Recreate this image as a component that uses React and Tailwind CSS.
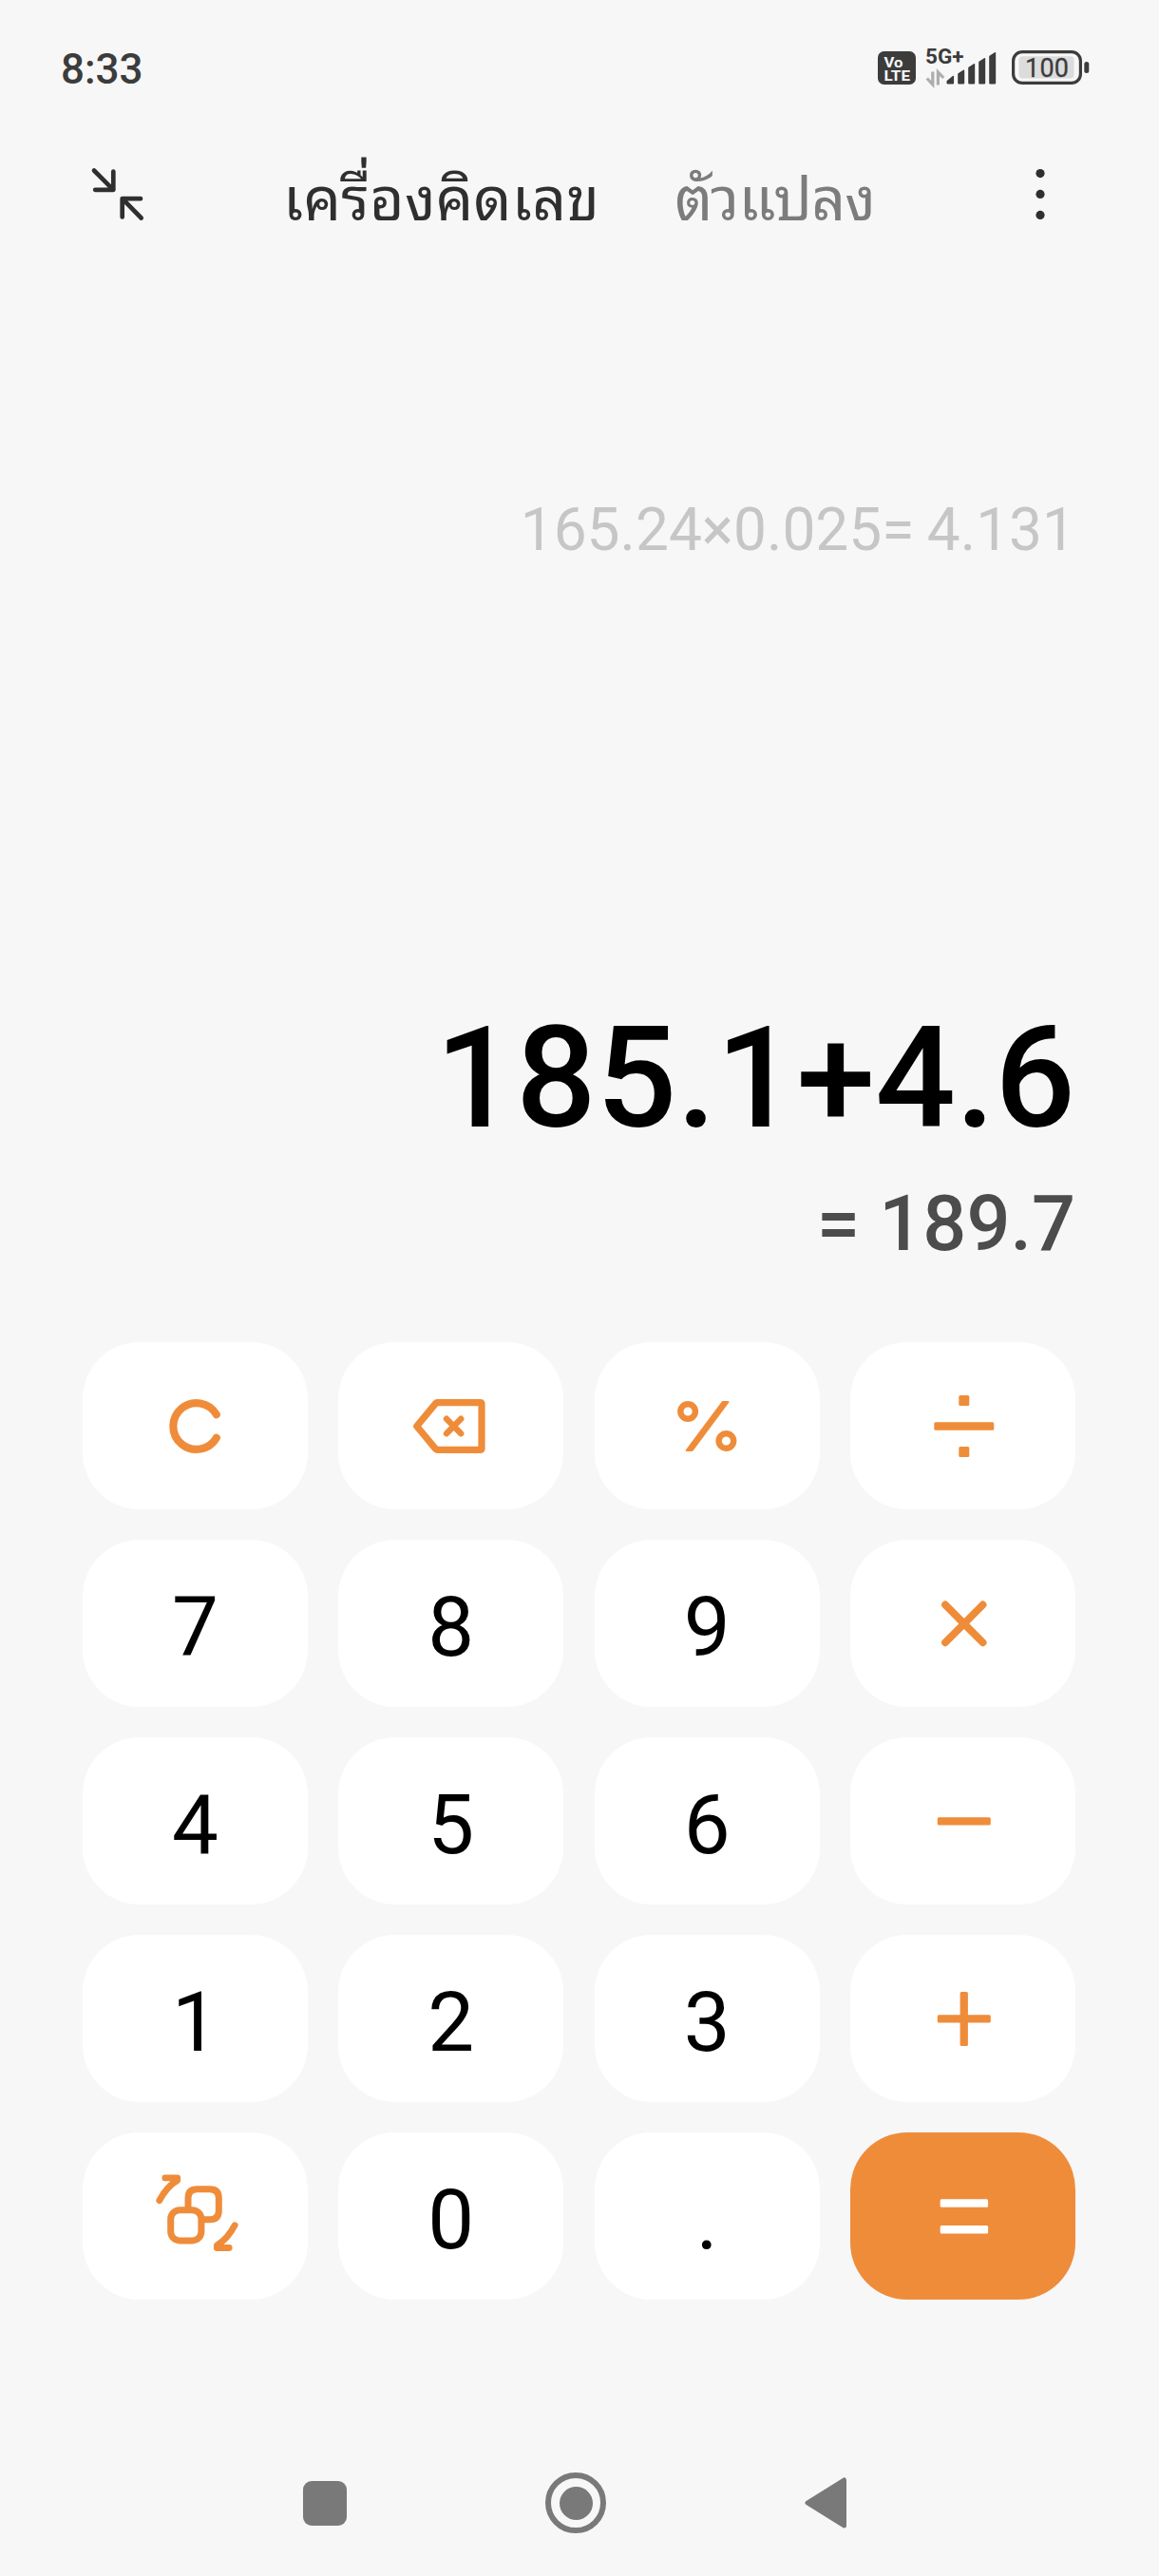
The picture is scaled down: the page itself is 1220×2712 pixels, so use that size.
import { useState } from 'react';

function CollapseIcon() {
    return (
        <svg className="w-[60px] h-[60px]" viewBox="0 0 60 60" fill="none" stroke="#2f2f2f" strokeWidth={4.7} strokeLinecap="round" strokeLinejoin="round">
            <path d="M5 5.5L25.3 25.8M25.3 6.7V25.8H6.2" />
            <path d="M54.7 55.5L34.7 35.2M54 35.2H34.7V54.5" />
        </svg>
    );
}

function MoreIcon() {
    return (
        <svg className="w-3 h-[60px]" viewBox="0 0 12 60" fill="#2f2f2f">
            <circle cx="5" cy="8.6" r="4.6" />
            <circle cx="5" cy="30.4" r="4.6" />
            <circle cx="5" cy="52.4" r="4.6" />
        </svg>
    );
}

function StatusBar() {
    return (
        <div className="h-36 pl-16 pr-[73px] flex items-center justify-between text-[#3c3c3c]">
            <span className="text-[44px] leading-none pt-0.5 font-medium">8:33</span>
            <div className="pb-0.5 flex items-center">
                <svg className="w-10 h-[35px]" viewBox="0 0 40 35">
                    <rect width="40" height="35" rx="6.5" fill="#3c3c3c" />
                    <text x="6.5" y="16.8" fontSize="15" fontWeight="700" fill="#f7f7f7" textLength="20" lengthAdjust="spacingAndGlyphs">Vo</text>
                    <text x="6.5" y="30.8" fontSize="15" fontWeight="700" fill="#f7f7f7" textLength="27.5" lengthAdjust="spacingAndGlyphs">LTE</text>
                </svg>
                <svg className="w-[76px] h-[60px] ml-2.5" viewBox="0 -10 76 60">
                    <text x="0" y="16.3" fontSize="21.5" fontWeight="700" fill="#3c3c3c" textLength="40.5" lengthAdjust="spacingAndGlyphs">5G+</text>
                    <g fill="none" stroke="#adadad" strokeWidth="3.2">
                        <path d="M7.8 24.5V38L1.8 31.5" />
                        <path d="M13.4 38.5V25L19.2 31" />
                    </g>
                    <g fill="#3c3c3c" stroke="#3c3c3c" strokeWidth="1.6" strokeLinejoin="round">
                        <path d="M23.3 36.6V34.6L29.3 29.6V36.6Z" />
                        <path d="M35 36.6V27L40.4 23.4V36.6Z" />
                        <path d="M46 36.6V20.5L51.4 16.8V36.6Z" />
                        <path d="M57 36.6V14.5L62.4 10.8V36.6Z" />
                        <path d="M68 36.6V8.5L73.4 4.8V36.6Z" />
                    </g>
                </svg>
                <svg className="w-[82px] h-9 ml-[15px]" viewBox="0 0 82 36">
                    <rect x="1.6" y="1.6" width="70.8" height="32.8" rx="9.5" fill="none" stroke="#3c3c3c" strokeWidth="3.2" />
                    <rect x="7.5" y="6.2" width="58" height="23.4" rx="4" fill="#dcdcdc" />
                    <rect x="76.3" y="12" width="5" height="12" rx="2.5" fill="#3c3c3c" />
                    <text x="14" y="28" fontSize="27" fontWeight="400" fill="#3c3c3c" stroke="#3c3c3c" strokeWidth="0.3" textLength="46">100</text>
                </svg>
            </div>
        </div>
    );
}

const icons = {
    clear: <path d="M22.8 -11.8A24.4 24.4 0 1 0 22.8 12.8" strokeWidth="8.2" />,
    back: (
        <>
            <path d="M-36.3 .5L-16.5 -23.4Q-15.8 -24.3 -14.5 -24.3H30.5Q32 -24.3 32 -22.8V23.8Q32 25.3 30.5 25.3H-14.5Q-15.8 25.3 -16.5 24.4Z" strokeWidth="7.2" />
            <path d="M-5 -7.3L10.2 8.3M10.2 -7.3L-5 8.3" strokeWidth="6.4" />
        </>
    ),
    percent: (
        <>
            <circle cx="-19.9" cy="-15" r="7.8" strokeWidth="6.4" />
            <circle cx="20.4" cy="16" r="7.8" strokeWidth="6.4" />
            <path d="M16.6 -25H22.5L-15.4 26H-21.3Z" fill="currentColor" strokeWidth="2" />
        </>
    ),
    divide: (
        <g fill="currentColor" stroke="none">
            <rect x="-30.7" y="-3.8" width="63" height="8.6" rx="1.5" />
            <rect x="-4.7" y="-32" width="11" height="11" rx="1.5" />
            <rect x="-4.7" y="22" width="11" height="11" rx="1.5" />
        </g>
    ),
    times: <path d="M-19 -19.5L20.6 20.3M20.6 -19.5L-19 20.3" strokeWidth="7.8" />,
    minus: <rect x="-27.2" y="-3.8" width="56" height="8.4" rx="1.5" fill="currentColor" stroke="none" />,
    plus: (
        <g fill="currentColor" stroke="none">
            <rect x="-27.2" y="-3.8" width="56" height="8.4" rx="1.5" />
            <rect x="-3.4" y="-28" width="8.3" height="57" rx="1.5" />
        </g>
    ),
    equals: (
        <g fill="currentColor" stroke="none">
            <rect x="-24.3" y="-17.8" width="50.4" height="8.6" rx="1.5" />
            <rect x="-24.3" y="10" width="50.4" height="8.6" rx="1.5" />
        </g>
    ),
    convert: (
        <>
            <rect x="-25.3" y="-6.3" width="32.2" height="32.2" rx="9.5" strokeWidth="7" />
            <path d="M-7 -6.5V-18.8Q-7 -28.3 2.5 -28.3H15.8Q25.3 -28.3 25.3 -18.8V-5.7Q25.3 3.8 15.8 3.8H8" strokeWidth="7" strokeLinecap="butt" />
            <path d="M-31.2 -40.1H-18.3V-37.5Q-29.5 -31 -37.2 -16.3" strokeWidth="6.8" />
            <path d="M-31.2 -40.1H-18.3V-37.5Q-29.5 -31 -37.2 -16.3" strokeWidth="6.8" transform="rotate(180 2.5 -3.3)" />
        </>
    ),
};

const keys = [
    { id: 'clear', icon: true }, { id: 'back', icon: true }, { id: 'percent', icon: true }, { id: 'divide', icon: true },
    { id: '7' }, { id: '8' }, { id: '9' }, { id: 'times', icon: true },
    { id: '4' }, { id: '5' }, { id: '6' }, { id: 'minus', icon: true },
    { id: '1' }, { id: '2' }, { id: '3' }, { id: 'plus', icon: true },
    { id: 'convert', icon: true }, { id: '0' }, { id: '.' }, { id: 'equals', icon: true },
];

function Key({ id, icon }) {
    const color = id === 'equals' ? 'bg-[#ef8c3a] text-white' : icon ? 'bg-white text-[#ef8c3a]' : 'bg-white text-black';

    return (
        <button aria-label={id} className={`h-44 rounded-[60px] flex items-center justify-center ${color}`}>
            {icon ? (
                <svg className="w-[100px] h-[100px]" viewBox="-50 -50 100 100" fill="none" stroke="currentColor" strokeLinecap="round" strokeLinejoin="round">
                    {icons[id]}
                </svg>
            ) : (
                <span className="text-[87px] leading-none pt-2">{id}</span>
            )}
        </button>
    );
}

function NavBar() {
    return (
        <div className="mt-[174px] h-20 pl-[319px] flex items-center">
            <div className="w-[46px] h-[47px] rounded-[9px] bg-[#797979]"></div>
            <div className="ml-[209px] w-16 h-16 rounded-full border-6 border-[#797979] flex items-center justify-center">
                <div className="w-[35px] h-[35px] rounded-full bg-[#797979]"></div>
            </div>
            <svg className="ml-[209px] w-[45px] h-[54px]" viewBox="0 0 45 54" fill="#797979" stroke="#797979" strokeWidth="5" strokeLinejoin="round">
                <path d="M3 27L41.5 3V51Z" />
            </svg>
        </div>
    );
}

export default function App() {
    const [tab, setTab] = useState('calculator');

    const tabColor = (name) => (tab === name ? 'text-[#2f2f2f]' : 'text-[#7c7c7c]');

    return (
        <div className="w-[1220px] h-[2712px] bg-[#f7f7f7] font-[Roboto,sans-serif] overflow-hidden">
            <StatusBar />

            <div className="h-30 pl-[94px] pr-[118px] flex items-center">
                <CollapseIcon />
                <div className="ml-[144px] flex gap-[79px] font-['Noto_Sans_Thai_Looped','Noto_Sans',sans-serif] text-[62.5px] leading-[80px] whitespace-nowrap">
                    <button onClick={() => setTab('calculator')} className={`tracking-[0.3px] ${tabColor('calculator')}`}>
                        เครื่องคิดเลข
                    </button>
                    <button onClick={() => setTab('converter')} className={`tracking-[-0.7px] ${tabColor('converter')}`}>
                        ตัวแปลง
                    </button>
                </div>
                <div className="ml-auto">
                    <MoreIcon />
                </div>
            </div>

            {/* History and current expression */}
            <div className="h-[1149px] pr-[88px] flex flex-col items-end whitespace-nowrap">
                <div className="mt-[258px] h-[72px] leading-[72px] text-[62.2px] [word-spacing:-2px] text-[#c6c6c6]">165.24×0.025= 4.131</div>
                <div className="mt-[461px] h-40 leading-40 text-[149px] font-medium text-black">185.1+4.6</div>
                <div className="mt-[26px] h-24 leading-24 text-[81px] font-medium text-[#4c4c4c]">= 189.7</div>
            </div>

            <div className="ml-[87px] w-[1045px] grid grid-cols-4 gap-x-[32.5px] gap-y-8">
                {keys.map((key) => (
                    <Key key={key.id} {...key} />
                ))}
            </div>

            <NavBar />
        </div>
    );
}
